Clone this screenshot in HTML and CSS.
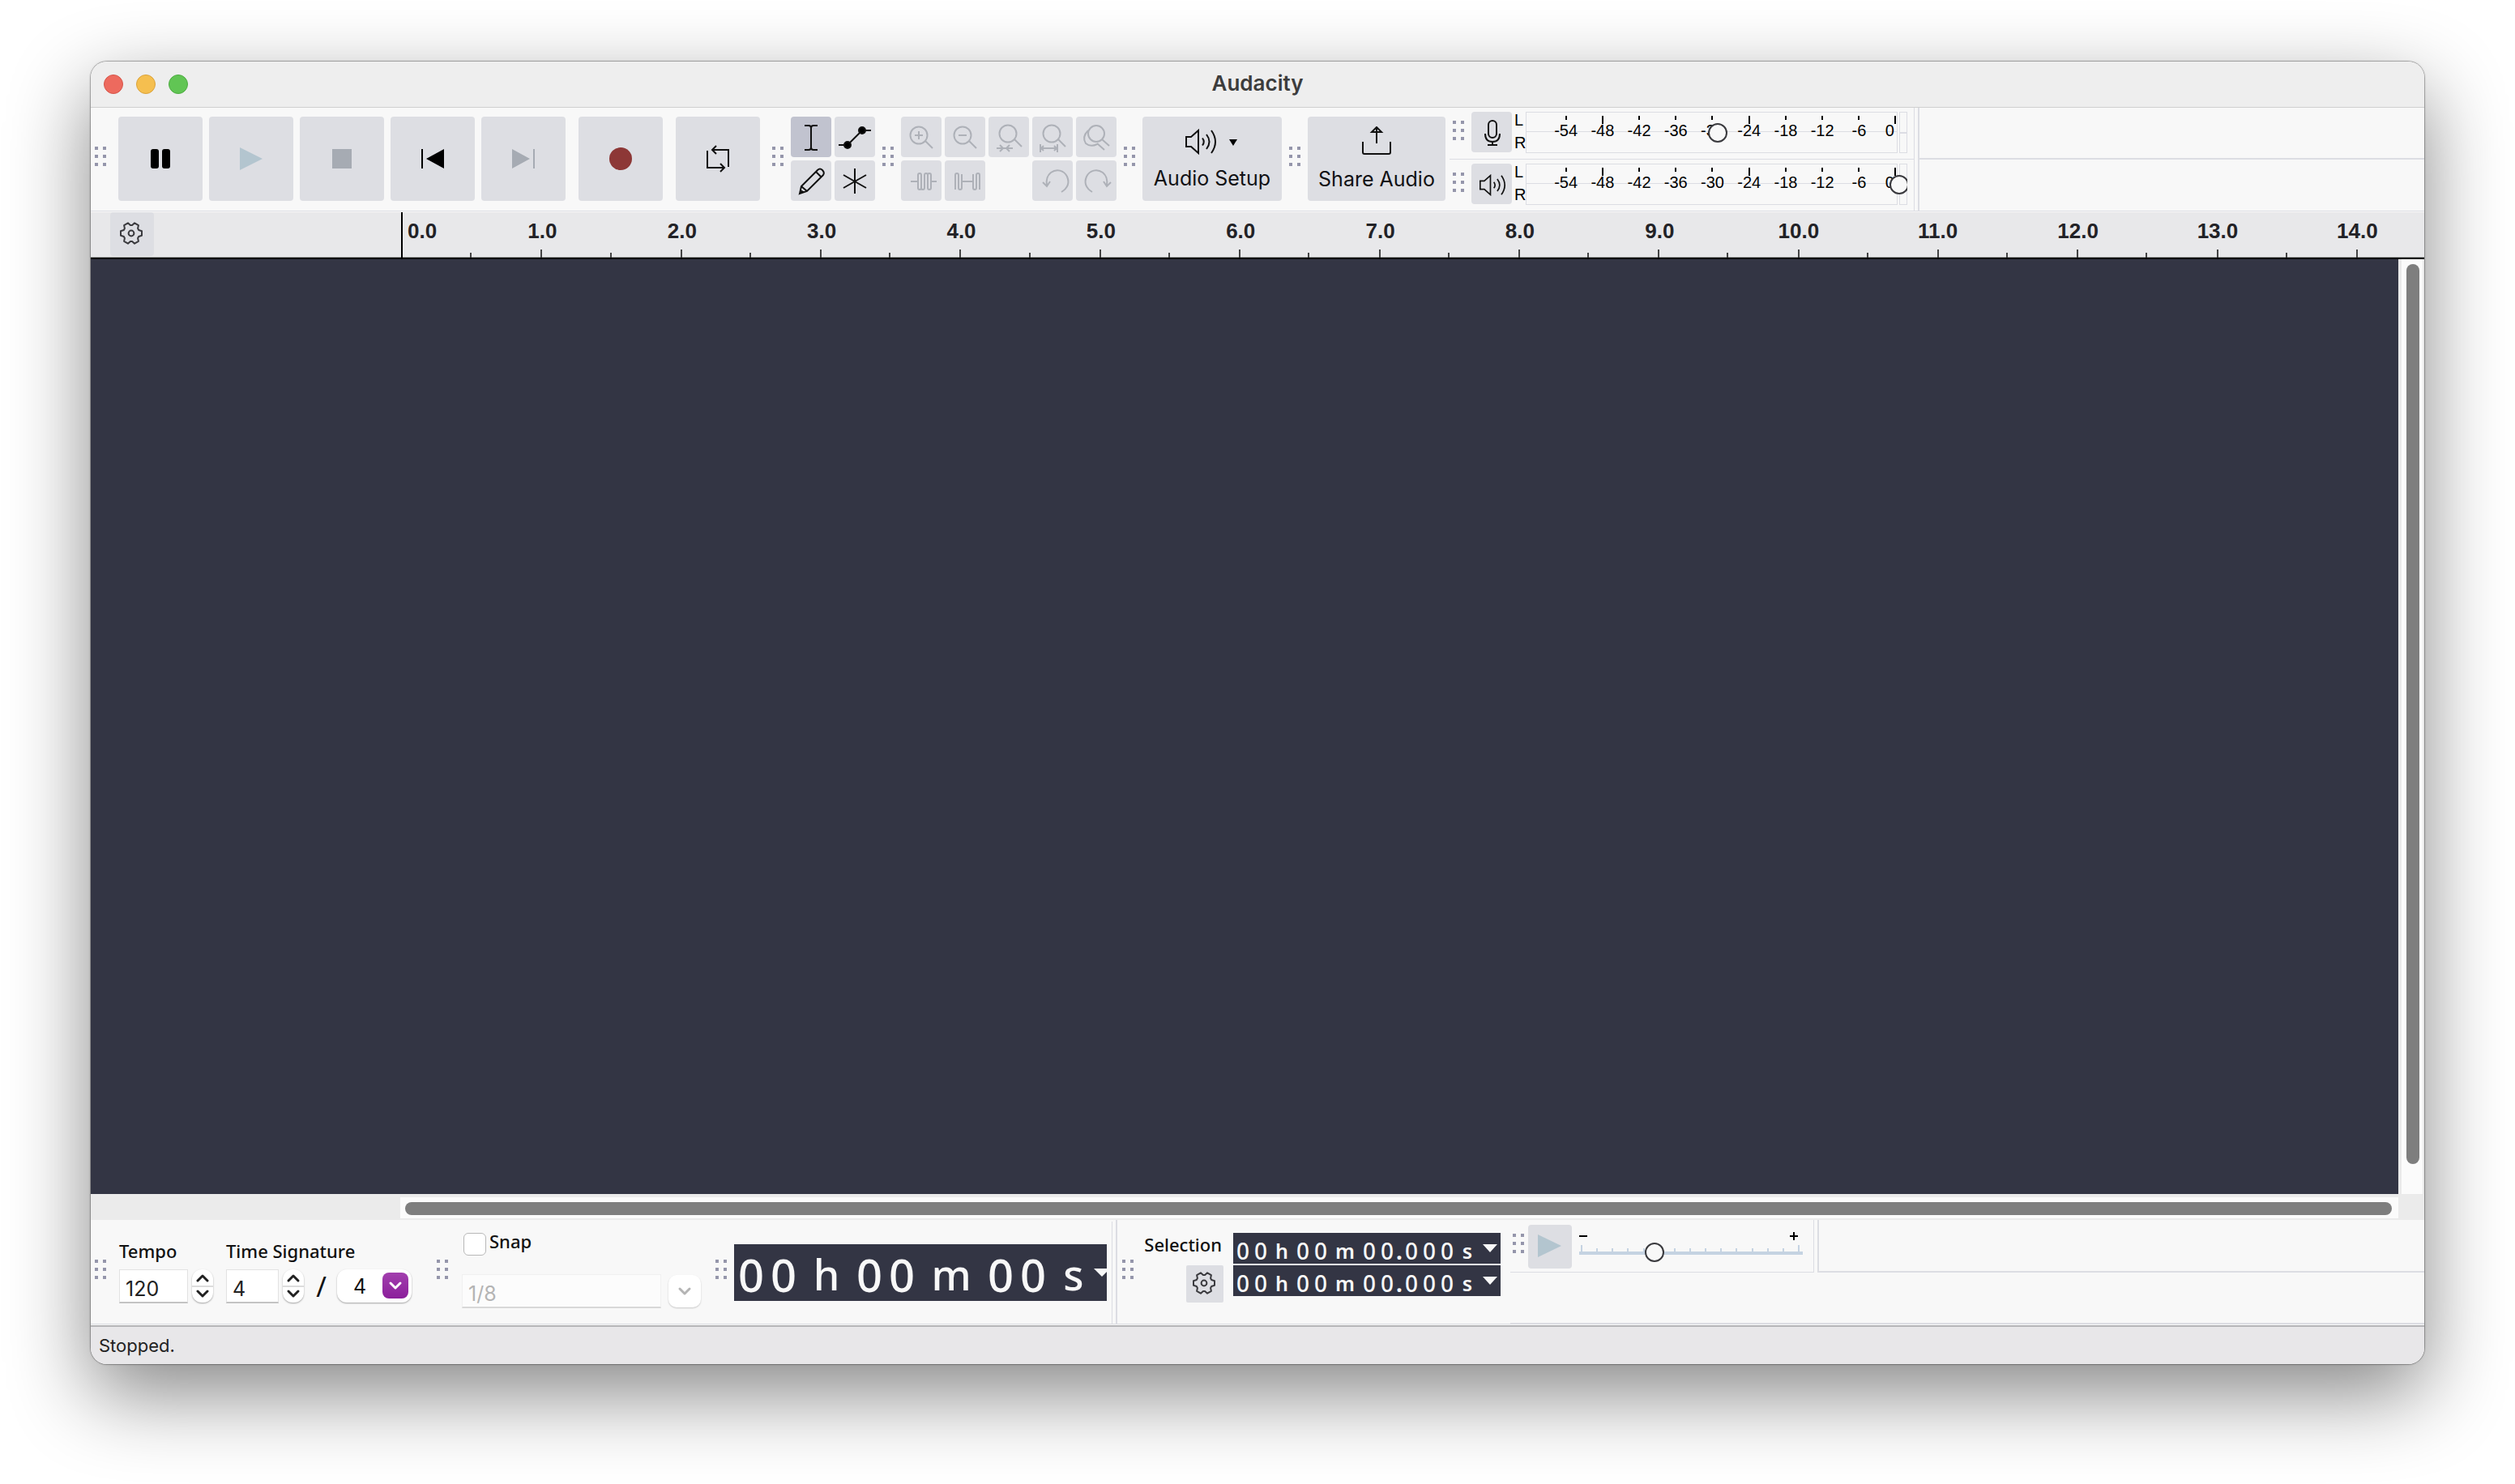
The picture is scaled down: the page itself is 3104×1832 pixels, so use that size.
FILE: index.html
```html
<!DOCTYPE html>
<html lang="en">
<head>
<meta charset="utf-8">
<title>Audacity</title>
<link rel="stylesheet" href="styles.css">
</head>
<body>
<svg class="defs" aria-hidden="true">
  <symbol id="gear" viewBox="-16 -16 32 32">
    <path d="M9.2-4 13-2.8V2.8L9.2 4 8.1 6 8.9 9.9 4.1 12.7 1.1 10H-1.1L-4.1 12.7-8.9 9.9-8.1 6-9.2 4-13 2.8V-2.8L-9.2-4-8.1-6-8.9-9.9-4.1-12.7-1.1-10H1.1L4.1-12.7 8.9-9.9 8.1-6Z"/>
    <circle r="3.4"/>
  </symbol>
  <symbol id="grip" viewBox="0 0 14 24">
    <path d="M0 0h4v4H0zM10 0h4v4h-4zM0 10h4v4H0zM10 10h4v4h-4zM0 20h4v4H0zM10 20h4v4h-4z"/>
  </symbol>
  <symbol id="speaker" viewBox="0 0 40 32">
    <path d="M2 10h6l9-8v28l-9-8H2z"/>
    <path d="M22 11.5q3.500 4.500 0 9M27 7q7 9 0 18M33 2q10 14 0 28"/>
  </symbol>
  <symbol id="updown" viewBox="0 0 26 41">
    <path d="M7 14l6-6 6 6M7 27l6 6 6-6"/>
  </symbol>
</svg>

<div class="window">
  <header class="titlebar">
    <div class="lights">
      <button class="light close" aria-label="Close"></button>
      <button class="light minimize" aria-label="Minimize"></button>
      <button class="light zoom" aria-label="Zoom"></button>
    </div>
    <h1>Audacity</h1>
  </header>

  <div class="dock top">
    <svg class="grip first"><use href="#grip"/></svg>
    <div class="transport">
      <button class="big" aria-label="Pause"><svg viewBox="0 0 104 104"><rect x="40" y="40" width="10" height="24" rx="3"/><rect x="54" y="40" width="10" height="24" rx="3"/></svg></button>
      <button class="big" aria-label="Play" disabled><svg viewBox="0 0 104 104"><path class="play" d="M38 38 66 52 38 66z"/></svg></button>
      <button class="big" aria-label="Stop" disabled><svg viewBox="0 0 104 104"><path class="off" d="M40 40h24v24H40z"/></svg></button>
      <button class="big" aria-label="Skip to Start"><svg viewBox="0 0 104 104"><path d="M38 40h2v24h-2zM66 40v24L44 52z"/></svg></button>
      <button class="big" aria-label="Skip to End" disabled><svg viewBox="0 0 104 104"><path class="off" d="M64 40h2v24h-2zM38 40v24l22-12z"/></svg></button>
      <button class="big apart" aria-label="Record"><svg viewBox="0 0 104 104"><circle class="record" cx="52" cy="52" r="14"/></svg></button>
      <button class="big apart" aria-label="Loop"><svg class="line" viewBox="0 0 104 104"><path d="M39 42v21h21M55 58l5 5-5 5M65 62V41H45M50 36l-5 5 5 5"/></svg></button>
    </div>

    <svg class="grip spaced"><use href="#grip"/></svg>
    <div class="tools two">
      <button class="small on" aria-label="Selection Tool"><svg class="line" viewBox="0 0 50 50"><path d="M17 11h5q3 0 3 3v24q0 3-3 3h-5M33 11h-5q-3 0-3 3v24q0 3 3 3h5"/></svg></button>
      <button class="small" aria-label="Envelope Tool"><svg class="line" viewBox="0 0 50 50"><path d="M5 35h11L34 17h11"/><circle class="solid" cx="34" cy="17" r="4"/><circle class="solid" cx="16" cy="35" r="4"/></svg></button>
      <button class="small" aria-label="Draw Tool"><svg class="line" viewBox="0 0 50 50"><path d="M11 41 13 32 33 12q3-3 6 0t1 6L20 38zM13 32l7 6M31 14l7 7M11 41l1-4 3 2z"/></svg></button>
      <button class="small" aria-label="Multi-Tool"><svg class="line" viewBox="0 0 50 50"><path d="M25 10v31M11 18l28 16M39 18 11 34"/></svg></button>
    </div>

    <svg class="grip"><use href="#grip"/></svg>
    <div class="tools five">
      <button class="small" aria-label="Zoom In" disabled><svg class="line" viewBox="0 0 50 50"><circle cx="22" cy="23" r="10.500"/><path d="M30 30l9 9M17 23h10M22 18v10"/></svg></button>
      <button class="small" aria-label="Zoom Out" disabled><svg class="line" viewBox="0 0 50 50"><circle cx="22" cy="23" r="10.500"/><path d="M30 30l9 9M17 23h10"/></svg></button>
      <button class="small" aria-label="Fit Selection to Width" disabled><svg class="line" viewBox="0 0 50 50"><circle cx="24" cy="21" r="10.500"/><path d="M32 28l9 9M10 39h20M14 35l4 4-4 4M26 35l-4 4 4 4"/></svg></button>
      <button class="small" aria-label="Fit Project to Width" disabled><svg class="line" viewBox="0 0 50 50"><circle cx="24" cy="21" r="10.500"/><path d="M32 28l9 9M10 39h21M10 34v10M31 34v10M14 36l-3 3 3 3M27 36l3 3-3 3"/></svg></button>
      <button class="small" aria-label="Zoom Toggle" disabled><svg class="line" viewBox="0 0 50 50"><circle cx="25" cy="21" r="10"/><path d="M32 28l9 8M15 17q-8 8-3 16 6 5 14 1M26 33l9 8"/></svg></button>
      <button class="small" aria-label="Trim Audio" disabled><svg class="line" viewBox="0 0 50 50"><path d="M12 26h9M21 34V18q0-2 2-2t2 2v16q0 2 2 2t2-2V18q0-2 2-2t2 2v16q0 2 2 2t2-2V18M37 26h7M21 34q0 2 2 2t2-2M37 18q0-2-2-2t-2 2"/></svg></button>
      <button class="small" aria-label="Silence Audio" disabled><svg class="line" viewBox="0 0 50 50"><path d="M13 36V18q0-2 2-2t2 2v16q0 2 2 2t2-2V17M21 26h14M35 17v17q0 2 2 2t2-2V18q0-2 2-2t2 2v18"/></svg></button>
      <span></span>
      <button class="small" aria-label="Undo" disabled><svg class="line" viewBox="0 0 50 50"><path d="M36 39C44 34 46 27 43 20 39 12 30 10 23 15 18 19 17 25 18 31M13 27l5 5 4-6"/></svg></button>
      <button class="small" aria-label="Redo" disabled><svg class="line" viewBox="0 0 50 50"><path d="M20 39C12 34 10 27 13 20 17 12 26 10 33 15 38 19 39 25 38 31M43 27l-5 5-4-6"/></svg></button>
    </div>

    <svg class="grip"><use href="#grip"/></svg>
    <button class="wide setup"><svg class="line" viewBox="0 0 68 36"><use href="#speaker" x="0" y="2" width="40" height="32"/><path class="caret" d="M55 15h10l-5 8z"/></svg>Audio Setup</button>
    <svg class="grip"><use href="#grip"/></svg>
    <button class="wide share"><svg class="line" viewBox="0 0 68 36"><path d="M17 19v13q0 2 2 2h30q2 0 2-2V19M34 21V2M28 7l6-6 6 6z"/></svg>Share Audio</button>

    <div class="meters">
      <div class="meter-row">
        <svg class="grip"><use href="#grip"/></svg>
        <button class="small" aria-label="Record Meter"><svg class="line" viewBox="0 0 50 50"><rect x="21" y="11" width="10" height="21" rx="5"/><path d="M17 27q0 10 9 10t9-10M26 37v4M20 41h12"/></svg></button>
        <div class="channels"><span>L</span><span>R</span></div>
        <div class="meter">
          <div class="scale"><span>-54</span><span class="major">-48</span><span>-42</span><span>-36</span><span>-30</span><span class="major">-24</span><span>-18</span><span>-12</span><span>-6</span><span class="major end">0</span></div>
          <div class="clip"></div>
          <input class="level" type="range" min="0" max="100" value="50" aria-label="Recording Volume">
        </div>
      </div>
      <div class="meter-row">
        <svg class="grip"><use href="#grip"/></svg>
        <button class="small" aria-label="Playback Meter"><svg class="line" viewBox="0 0 50 50"><use href="#speaker" x="9" y="13" width="34" height="27"/></svg></button>
        <div class="channels"><span>L</span><span>R</span></div>
        <div class="meter">
          <div class="scale"><span>-54</span><span class="major">-48</span><span>-42</span><span>-36</span><span>-30</span><span class="major">-24</span><span>-18</span><span>-12</span><span>-6</span><span class="major end">0</span></div>
          <div class="clip"></div>
          <input class="level" type="range" min="0" max="100" value="100" aria-label="Playback Volume">
        </div>
      </div>
    </div>
    <div class="filler"><div></div><div></div></div>
  </div>

  <div class="timeline">
    <div class="timeline-options"><button aria-label="Timeline Options"><svg class="gear"><use href="#gear"/></svg></button></div>
    <div class="ruler">
      <span class="zero">0.0</span><span>1.0</span><span>2.0</span><span>3.0</span><span>4.0</span><span>5.0</span><span>6.0</span><span>7.0</span><span>8.0</span><span>9.0</span><span>10.0</span><span>11.0</span><span>12.0</span><span>13.0</span><span class="last">14.0</span>
    </div>
  </div>

  <main class="workspace">
    <div class="tracks"></div>
    <div class="vscroll"><div class="thumb"></div></div>
  </main>
  <div class="hscroll"><div class="track"><div class="thumb"></div></div></div>

  <div class="dock bottom">
    <svg class="grip first"><use href="#grip"/></svg>
    <div class="field tempo">
      <label for="tempo">Tempo</label>
      <div class="controls">
        <input id="tempo" class="box" type="text" value="120">
        <button class="stepper" aria-label="Change Tempo"><svg><use href="#updown"/></svg></button>
      </div>
    </div>
    <div class="field signature">
      <label for="upper">Time Signature</label>
      <div class="controls">
        <input id="upper" class="box" type="text" value="4">
        <button class="stepper" aria-label="Change Beats"><svg><use href="#updown"/></svg></button>
        <span class="slash">/</span>
        <div class="picker">
          <select aria-label="Note Value"><option>4</option></select>
          <svg viewBox="0 0 32 32"><path d="M10 13l6 6 6-6"/></svg>
        </div>
      </div>
    </div>

    <svg class="grip after-signature"><use href="#grip"/></svg>
    <div class="snap">
      <div class="snap-toggle"><input type="checkbox" id="snap"><label for="snap">Snap</label></div>
      <div class="controls">
        <input class="box" type="text" value="1/8" aria-label="Snap To" disabled>
        <button class="drop" aria-label="Snap Choices" disabled><svg viewBox="0 0 40 40"><path d="M14 17l6 6 6-6"/></svg></button>
      </div>
    </div>

    <svg class="grip after-snap"><use href="#grip"/></svg>
    <div class="time large">
      <span>0</span><span>0</span><i class="h">h</i><span>0</span><span>0</span><i class="m">m</i><span>0</span><span>0</span><i class="s">s</i>
      <button aria-label="Time Format"><svg viewBox="0 0 16 10"><path d="M0 0h20l-10 10z"/></svg></button>
    </div>

    <div class="selection">
      <svg class="grip"><use href="#grip"/></svg>
      <div class="selection-side">
        <span>Selection</span>
        <button aria-label="Selection Options"><svg class="gear"><use href="#gear"/></svg></button>
      </div>
      <div class="times">
        <div class="time compact">
          <span>0</span><span>0</span><i class="h">h</i><span>0</span><span>0</span><i class="m">m</i><span>0</span><span>0</span><b>.</b><span>0</span><span>0</span><span>0</span><i class="s">s</i>
          <button aria-label="Start Format"><svg viewBox="0 0 18 10"><path d="M0 0h18l-9 10z"/></svg></button>
        </div>
        <div class="time compact">
          <span>0</span><span>0</span><i class="h">h</i><span>0</span><span>0</span><i class="m">m</i><span>0</span><span>0</span><b>.</b><span>0</span><span>0</span><span>0</span><i class="s">s</i>
          <button aria-label="End Format"><svg viewBox="0 0 18 10"><path d="M0 0h18l-9 10z"/></svg></button>
        </div>
      </div>
    </div>

    <div class="rest">
      <div class="rest-top">
        <div class="speed">
          <svg class="grip"><use href="#grip"/></svg>
          <button class="speed-play" aria-label="Play at Speed" disabled><svg viewBox="0 0 54 54"><path class="play" d="M12 12 41 26 12 40z"/></svg></button>
          <div class="speed-slider">
            <div class="signs"><svg viewBox="0 0 10 10"><path d="M0 4h10v2H0z"/></svg><svg viewBox="0 0 10 10"><path d="M0 4h10v2H0zM4 0h2v10H4z"/></svg></div>
            <div class="ticks"><i></i><i></i><i></i><i></i><i></i><i></i><i></i><i></i><i></i><i></i><i></i><i></i><i></i><i></i><i></i></div>
            <input class="level" type="range" min="0" max="100" value="34" aria-label="Playback Speed">
          </div>
        </div>
        <div class="blank"></div>
      </div>
      <div class="rest-bottom"></div>
    </div>
  </div>

  <footer class="status">Stopped.</footer>
</div>
</body>
</html>
```
FILE: styles.css
```css
* { box-sizing: border-box; }

body {
  margin: 0;
  min-height: 100vh;
  padding: 76px 112px 148px;
  display: flex;
  background: #fff;
  color: #111114;
  font-family: Inter, "Liberation Sans", sans-serif;
  overflow: hidden;
}

.defs { position: absolute; width: 0; height: 0; }

button, input, select { margin: 0; padding: 0; border: 0; font: inherit; color: inherit; }
button { display: block; background: #dddee3; border-radius: 4px; }
button svg { display: block; width: 100%; height: 100%; }

.window {
  flex: 1;
  min-width: 0;
  display: flex;
  flex-direction: column;
  overflow: hidden;
  border-radius: 20px;
  background: #f8f8f8;
  box-shadow: 0 0 0 1px rgba(0, 0, 0, .22), 0 0 3px rgba(0, 0, 0, .25), 0 36px 100px rgba(0, 0, 0, .48);
}

/* Title bar */
.titlebar {
  display: grid;
  grid-template-columns: 1fr auto 1fr;
  align-items: center;
  height: 57px;
  padding: 0 16px;
  background: #eeeeee;
  border-bottom: 1px solid #d0d0d0;
}
.lights { display: flex; gap: 16px; }
.light { width: 24px; height: 24px; border-radius: 50%; border: 1px solid; }
.close { background: #ed6a5e; border-color: #d5554a; }
.minimize { background: #f5bf4f; border-color: #d9a23b; }
.zoom { background: #61c554; border-color: #4dab41; }
h1 { margin: 0; padding-bottom: 2px; font-size: 26px; line-height: 32px; font-weight: 600; color: #3c3c3c; }

/* Docks */
.dock { display: flex; align-items: flex-start; gap: 9px; background: #f8f8f8; }
.grip { flex: none; width: 14px; height: 24px; fill: #9596ab; }

.top { height: 128px; margin-bottom: 1px; border-bottom: 1px solid #dcdde3; }
.top > .grip { margin-top: 48px; }
.grip.first { margin-left: 5px; margin-right: 6px; }
.top > .spaced { margin-left: 6px; }
.transport { display: flex; gap: 8px; padding-top: 11px; }
.big { width: 104px; height: 104px; }
.apart { margin-left: 8px; }
.tools { display: grid; grid-auto-rows: 50px; gap: 4px; padding-top: 11px; }
.two { grid-template-columns: repeat(2, 50px); }
.five { grid-template-columns: repeat(5, 50px); }
.small { width: 50px; height: 50px; }
.on { background: #c1c3cf; }

.line { fill: none; stroke: #111; stroke-width: 2; }
:disabled .line { stroke: #aeb1b8; }
.off { fill: #a6abb3; }
.play { fill: #b3c5cf; }
.record { fill: #8d3736; }
.solid { fill: #000; }
.caret { fill: #000; stroke: none; }
.gear { fill: none; stroke: #3a3a3e; stroke-width: 2; stroke-linejoin: round; }

.wide { height: 104px; margin-top: 11px; font-size: 25px; line-height: 30px; white-space: nowrap; }
.wide svg { width: 68px; height: 36px; margin: 0 auto 14px; }
.setup { width: 172px; }
.setup svg { margin-bottom: 12px; }
.share { width: 170px; }

/* Meters */
.meters { flex: none; width: 574px; margin-left: -4px; border-right: 1px solid #dcdde3; }
.meter-row { display: flex; height: 63px; padding: 5px 8px 0 4px; }
.meter-row:first-child { height: 64px; border-bottom: 1px solid #dcdde3; }
.meter-row .grip { margin: 11px 9px 0 0; }
.channels { display: flex; flex-direction: column; gap: 8px; width: 17px; padding-left: 3px; font: 20px/20px "Liberation Sans", sans-serif; color: #000; }
.meter { position: relative; flex: 1; display: flex; gap: 2px; height: 51px; overflow: hidden; }
.scale {
  flex: 1;
  display: grid;
  grid-template-columns: repeat(9, 1fr) 24px;
  padding: 4px 0 0 26px;
  border: 1px solid #dcdde3;
  background: linear-gradient(#dcdde3, #dcdde3) 0 24px / 100% 1px no-repeat;
  background-origin: border-box;
  font: 20px/20px "Liberation Sans", sans-serif;
  color: #000;
  text-align: center;
}
.scale span::before { content: ""; display: block; width: 2px; height: 5px; margin: 0 auto 3px; background: #000; }
.scale .major::before { height: 10px; margin-bottom: -2px; }
.scale .end { text-align: right; padding-right: 3px; }
.scale .end::before { margin-right: -2px; }
.clip { width: 10px; border: 1px solid #dcdde3; background: linear-gradient(#dcdde3, #dcdde3) 0 24px / 100% 2px no-repeat; }

.level { position: absolute; appearance: none; background: none; height: 24px; }
.level::-webkit-slider-thumb { appearance: none; width: 24px; height: 24px; border: 2px solid #3a3a3e; border-radius: 50%; background: #f8f8f8; }
.meter .level { left: 0; top: 14px; width: calc(100% + 2px); }

.filler { flex: 1; align-self: stretch; margin-left: -5px; border-left: 2px solid #dcdde3; }
.filler div { height: 63px; }
.filler div:first-child { height: 64px; border-bottom: 2px solid #dcdde3; }

/* Timeline */
.timeline { display: flex; height: 58px; background: #e8e8ea; border-bottom: 2px solid #000; box-shadow: inset 0 -1px #a8aaa8; }
.timeline-options { width: 383px; padding-left: 24px; }
.timeline-options button { width: 54px; height: 54px; padding: 10px 12px 12px 10px; }
.ruler { flex: 1; display: grid; grid-template-columns: repeat(14, 1fr) 84px; font: bold 26px/32px "Liberation Sans", sans-serif; color: #222226; }
.ruler span {
  padding-top: 7px;
  text-indent: -16px;
  background:
    linear-gradient(#444, #444) 0 100% / 2px 10px no-repeat,
    linear-gradient(#444, #444) 50% 100% / 2px 6px no-repeat;
}
.ruler span:nth-child(n + 11) { text-indent: -24px; }
.ruler .zero { text-indent: 8px; background: linear-gradient(#000, #000) 0 0 / 2px 100% no-repeat, linear-gradient(#444, #444) 50% 100% / 2px 6px no-repeat; }
.ruler .last { background: linear-gradient(#444, #444) 0 100% / 2px 10px no-repeat; }

/* Tracks and scroll bars */
.workspace { flex: 1; display: flex; }
.tracks { flex: 1; background: #333544; }
.vscroll { width: 32px; padding: 6px 4px 37px 6px; background: #fbfbfb; border: solid #ebebeb; border-width: 0 2px 0 4px; }
.thumb { background: #7e7e7e; border-radius: 8px; }
.vscroll .thumb { width: 16px; height: 100%; }
.hscroll { height: 32px; padding: 4px 32px 2px 382px; background: #ebebeb; }
.track { height: 26px; padding: 6px 8px 4px 6px; background: #fbfbfb; }
.hscroll .thumb { height: 16px; }

/* Bottom dock */
.bottom { height: 129px; margin-bottom: 1px; border-bottom: 1px solid #dcdde3; font-family: "Noto Sans", sans-serif; font-size: 22px; line-height: 28px; font-weight: 500; color: #111; }
.bottom > .grip { margin-top: 49px; }
.field { padding-top: 24px; }
.field label { display: block; margin-bottom: 9px; white-space: nowrap; }
.tempo { margin-left: 1px; }
.signature { margin-left: 7px; }
.controls { display: flex; align-items: flex-start; gap: 5px; }
.box {
  height: 42px;
  padding: 6px 7px 0;
  background: #fff;
  border: 1px solid #e2e2e2;
  border-bottom: 2px solid #c3c3c3;
  font: 25px/30px Inter, sans-serif;
  color: #222;
}
.tempo .box { width: 85px; }
.signature .box { width: 65px; }
.stepper {
  width: 26px;
  height: 41px;
  border-radius: 12px;
  background: linear-gradient(#dcdcdc, #dcdcdc) 0 50% / 100% 2px no-repeat #fff;
  box-shadow: 0 1px 2px rgba(0, 0, 0, .35);
}
.stepper svg, .picker svg, .drop svg { fill: none; stroke: #222; stroke-width: 3; stroke-linecap: round; stroke-linejoin: round; }
.slash { width: 31px; padding-left: 2px; text-align: center; font-size: 34px; line-height: 42px; font-weight: 400; }
.picker { position: relative; }
.picker select {
  display: block;
  width: 92px;
  height: 41px;
  padding-left: 20px;
  appearance: none;
  border-radius: 12px;
  background: #fff;
  box-shadow: 0 1px 2px rgba(0, 0, 0, .35);
  font: 25px/40px Inter, sans-serif;
}
.picker svg { position: absolute; right: 4px; top: 4px; width: 32px; height: 32px; border-radius: 8px; background: linear-gradient(#a23fae, #8b1f9b); stroke: #fff; }

.bottom > .after-signature { margin-left: 22px; }
.snap { padding: 16px 0 0 8px; }
.snap-toggle { display: flex; align-items: flex-start; gap: 4px; height: 51px; padding-left: 2px; }
.snap-toggle input { width: 28px; height: 28px; appearance: none; border: 1px solid #b8b8b8; border-radius: 6px; background: #fff; }
.snap-toggle label { margin-top: -4px; }
.snap .box { width: 246px; background: #fcfcfc; border-color: #f0f0f0 #f0f0f0 #d8d8d8; color: #b4b4b4; }
.snap .controls { gap: 9px; }
.drop { width: 40px; height: 40px; margin-top: 1px; border-radius: 10px; background: #fff; box-shadow: 0 1px 2px rgba(0, 0, 0, .2); }
.drop svg { stroke: #b4b4b4; }
.bottom > .after-snap { margin-left: 9px; }

.time { display: flex; background: #333544; color: #f8f8f8; text-align: center; }
.time i { font-style: normal; font-weight: 600; }
.time button { background: none; border-radius: 0; fill: #f8f8f8; }
.large { flex: none; width: 460px; height: 70px; margin-top: 30px; padding-left: 1px; font-size: 56px; line-height: 74px; }
.large span { width: 40px; }
.large i { font-size: 52px; font-weight: 500; }
.large .h { width: 66px; }
.large .m { width: 82px; }
.large .s { width: 55px; padding-left: 5px; }
.large button { width: 16px; height: 10px; margin-top: 30px; }

.selection { position: relative; display: flex; align-self: stretch; margin-left: 2px; padding-left: 6px; border-left: 2px solid #dcdde3; }
.selection::before { content: ""; position: absolute; left: -7px; top: 2px; bottom: 0; width: 1px; background: #dcdde3; }
.selection .grip { margin-top: 49px; }
.selection-side { display: flex; flex-direction: column; align-items: flex-end; gap: 12px; width: 111px; padding-top: 16px; }
.selection-side span { margin-right: 2px; }
.selection-side button { width: 46px; height: 46px; padding: 6px 8px 8px 6px; border-radius: 2px; }
.times { display: grid; gap: 2px; align-content: start; padding: 16px 0 0 12px; }
.compact { width: 330px; height: 38px; padding-left: 1px; font-size: 28px; line-height: 44px; }
.compact span { width: 22px; }
.compact i { font-size: 25px; }
.compact .h { width: 30px; }
.compact .m { width: 38px; }
.compact b { width: 8px; }
.compact .s { width: 28px; }
.compact button { width: 18px; height: 10px; margin: 14px 0 0 5px; }

.rest { flex: 1; align-self: stretch; margin-left: 3px; }
.rest-top { display: flex; height: 65px; }
.rest-bottom { height: 63px; border-bottom: 1px solid #dcdde3; }
.speed { display: flex; width: 375px; padding: 6px 0 0 3px; border: solid #dcdde3; border-width: 0 1px 1px 0; }
.speed .grip { margin-top: 11px; }
.speed-play { width: 54px; height: 54px; margin-left: 5px; }
.speed-slider { position: relative; width: 276px; margin-left: 9px; }
.signs { display: flex; justify-content: space-between; padding: 9px 6px 6px 0; }
.signs svg { width: 10px; height: 10px; }
.ticks { display: flex; justify-content: space-between; align-items: flex-end; height: 12px; padding: 0 4px 4px 2px; background: linear-gradient(#c5d3e2, #c5d3e2) 0 100% / 100% 4px no-repeat; }
.ticks i { width: 2px; height: 4px; background: #c5d3e2; }
.ticks i:first-child, .ticks i:last-child { height: 8px; }
.speed-slider .level { left: -10px; top: 22px; width: 293px; }
.blank { flex: 1; margin-left: 4px; border: solid #dcdde3; border-width: 0 0 2px 2px; }

.status { height: 48px; padding: 8px 10px 0; border-top: 2px solid #b5b5b8; background: #e8e7e9; font-size: 22px; line-height: 30px; color: #222; }
```
